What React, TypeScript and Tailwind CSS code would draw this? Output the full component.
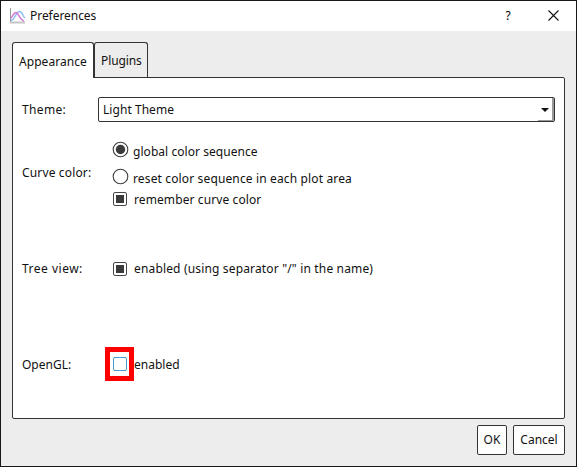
import React from "react";

function Radio({ checked = false }: { checked?: boolean }) {
  return (
    <svg width="17" height="17" viewBox="0 0 17 17" className="-ml-px block shrink-0">
      <circle cx="8.5" cy="8.5" r="7.3" fill="#fff" stroke="#404040" strokeWidth="1.1" />
      {checked && <circle cx="8.5" cy="8.5" r="4.7" fill="#3b3b3b" />}
    </svg>
  );
}

function Check({ checked = false }: { checked?: boolean }) {
  return (
    <span
      className={`flex h-3.5 w-3.5 shrink-0 items-center justify-center rounded-[2px] border bg-white ${
        checked ? "border-[#484848]" : "border-[#4b9bcf]"
      }`}
    >
      {checked && <span className="h-2 w-2 bg-[#3b3b3b]" />}
    </span>
  );
}

export default function App() {
  return (
    <div className="flex h-[467px] w-[577px] flex-col overflow-hidden border border-[#1a1718] bg-[#ededed] font-['Noto_Sans',sans-serif] text-[12px] leading-4 whitespace-nowrap text-[#111]">
      <header className="flex h-[30px] shrink-0 items-center bg-white pl-[9px]">
        <svg width="16" height="16" viewBox="0 0 16 16" fill="none" className="shrink-0">
          <path d="M.5 0v15" stroke="#999" />
          <path d="M0 14.5h15" stroke="#c4c4c4" strokeWidth="2" />
          <path d="M1 12.5C5 12 6 3.5 9.5 3.5c3 0 3 4.500 5.500 6.500" stroke="#8ebdf2" strokeWidth="1.4" />
          <path d="M1 10C3 8 3.500 4.500 6 4.500s3.500 7.500 8 8.500" stroke="#d477d8" strokeWidth="1.4" />
        </svg>
        <span className="ml-1 flex-1 tracking-[-0.05px]">Preferences</span>
        <span className="w-[8px] text-center text-black">?</span>
        <svg width="11" height="11" viewBox="0 0 11 11" className="mt-[-2px] mr-[17px] ml-[36px]">
          <path d="M.5.5l10 10M10.5.5l-10 10" stroke="#111" strokeWidth="1.1" />
        </svg>
      </header>

      <div className="flex h-[388px] shrink-0 flex-col pt-[11px] pr-[11px] pl-[11px]">
        <nav className="z-10 flex h-9 shrink-0 items-start">
          <div className="-mb-px flex h-9 w-[82px] items-center rounded-t-[3px] border border-b-0 border-[#333] bg-white pt-[3px] pl-[6px] tracking-[0.05px]">
            Appearance
          </div>
          <div className="flex h-[35px] w-[54px] items-center rounded-t-[3px] border border-b-0 border-[#333] pt-px pl-[6px] tracking-[-0.1px]">
            Plugins
          </div>
        </nav>
        <main className="-mt-px h-[342px] shrink-0 rounded-[2px] rounded-tl-none border border-[#333] bg-white pr-[9px] pl-[9px]">
          <section className="mt-[19px] flex h-[25px] items-center">
            <span className="w-[76px] tracking-[0.35px]">Theme:</span>
            <div className="flex h-[25px] flex-1 items-center rounded-[2px] border border-[#333] pl-1">
              <span className="flex-1 tracking-[0.05px]">Light Theme</span>
              <span className="flex h-full w-[16px] items-center justify-center border-r-2 border-b border-[#999]">
                <svg width="8" height="4" viewBox="0 0 8 4" className="mt-px">
                  <path d="M0 0h8L4 4z" fill="#111" />
                </svg>
              </span>
            </div>
          </section>
          <section className="mt-[19px] flex h-[66px] items-start">
            <span className="mt-[24px] w-[91px] tracking-[0.15px]">Curve color:</span>
            <div>
              <div className="flex h-[17px] items-center">
                <Radio checked />
                <span className="mt-1 ml-1 tracking-[0.05px]">global color sequence</span>
              </div>
              <div className="mt-[10px] flex h-[17px] items-center">
                <Radio />
                <span className="mt-1 ml-1 tracking-[0.14px]">reset color sequence in each plot area</span>
              </div>
              <div className="mt-[7px] flex h-[14px] items-center">
                <Check checked />
                <span className="mt-px ml-[7px] tracking-[0.1px]">remember curve color</span>
              </div>
            </div>
          </section>
          <section className="mt-[54px] flex h-4 items-center">
            <span className="w-[91px] tracking-[0.5px]">Tree view:</span>
            <Check checked />
            <span className="ml-[7px] tracking-[0.16px]">enabled (using separator "/" in the name)</span>
          </section>
          <section className="mt-[70px] flex h-[34px] items-center">
            <span className="mt-[2px] w-[83px]">OpenGL:</span>
            <span className="flex h-[34px] w-[29px] items-center border-5 border-[#ff0000] pl-[3px]">
              <Check />
            </span>
            <span className="mt-[2px]">enabled</span>
          </section>
        </main>
      </div>

      <footer className="mt-[6px] flex h-[30px] shrink-0 justify-end gap-[6px] pr-[11px]">
        <button className="w-[30px] rounded-[2px] border border-[#333] bg-white">OK</button>
        <button className="w-[52px] rounded-[2px] border border-[#333] bg-white">Cancel</button>
      </footer>
    </div>
  );
}
